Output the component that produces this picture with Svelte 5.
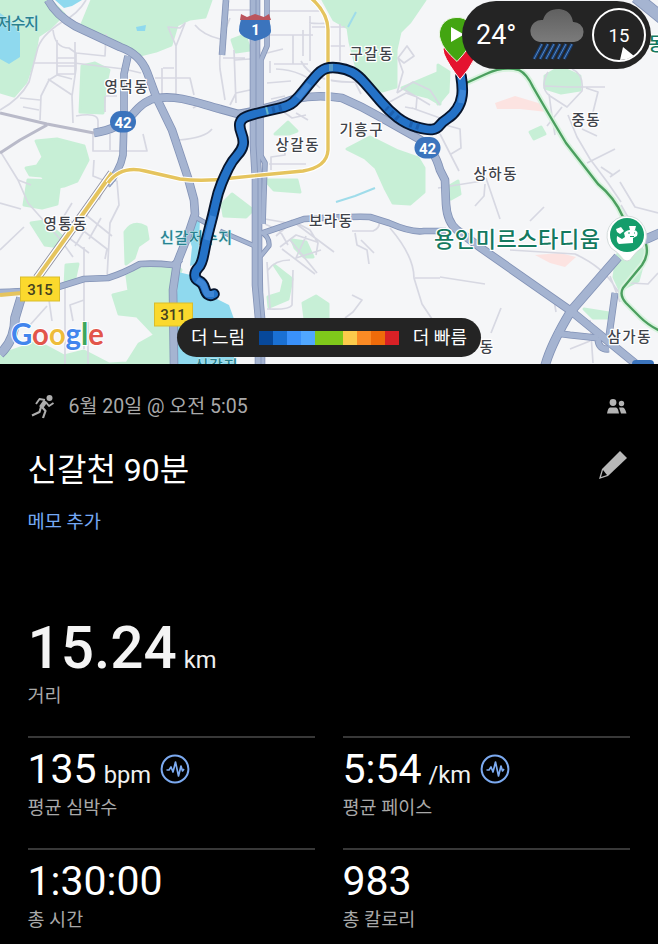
<script>
  const paceColors = [
    "#07489a", "#1a70d3", "#3a91fa", "#50a7ff", "#7fc91b",
    "#7fc91b", "#fccb4b", "#fb8b25", "#ef6b0a", "#d82126"
  ];

  const parks = [
    "M0 0H50L64 14 50 28 38 36 34 58 26 82 14 96 0 92Z",
    "M92 0H211L205 17 190 19 177 25 171 45 156 51 140 55 129 51 119 44 80 29Z",
    "M82 66 95 63 109 70 105 88 103 113 80 112Z",
    "M36 141 57 139 84 146 88 160 77 181 64 186 52 188 42 176 30 175 26 168 37 166 43 157Z",
    "M28 180 60 181 57 204 42 208 24 205Z",
    "M31 223 45 221 64 238 60 247 45 245Z",
    "M125 232Q133 220 146 227L148 239 138 246 134 258 126 264Z",
    "M66 265 78 264 74 282 65 287Z",
    "M127 276 153 262 174 264 181 270 173 290 173 364 66 364 0 364 0 355 38 342 64 356 84 351 109 364 127 363 139 344 155 335 137 316 119 314 113 295 129 291Z",
    "M323 0H425L410 22 400 32 396 50 396 87 382 91 365 80 356 65 350 42 348 28 334 20Z",
    "M402 88 440 72V104L428 97 412 93Z",
    "M438 65 449 72 448 92 438 104Z",
    "M232 40 245 35 250 50 236 52Z",
    "M276 133 288 122 297 131 289 134 275 134Z",
    "M347 149 370 137 398 151 418 158 424 168 424 192 410 204 393 203 385 188 376 168 365 158Z",
    "M265 180H297L300 192 274 190Z",
    "M222 204 232 194 253 210 246 217 224 216Z",
    "M292 240 306 242 313 257 304 257 295 248Z",
    "M274 265 292 279 288 299 269 307 268 297 281 293 284 280Z",
    "M303 303 316 296 328 304V319H305Z",
    "M545 76 560 67 580 76 580 90 561 93 545 88Z",
    "M530 132 541 127 545 134 534 139Z",
    "M617 255 631 242 646 252 638 281 620 290 614 277Z",
    "M584 309 609 313 611 318 593 318Z",
    "M448 187 458 181 460 194 451 199Z"
  ];

  const water = [
    "M0 13Q12 21 20 33V57L9 64 0 59Z",
    "M55 0H82L72 6 64 8Z",
    "M136 27 146 25 145 31 137 31Z",
    "M178 272 195 276 207 300 217 299 229 305 234 319V364H174Z",
    "M190 222 200 219 198 263 190 266 192 247 188 235Z"
  ];

  const streets = [
    "M86 0Q78 14 62 22 40 36 37 51L29 82Q20 99 0 110",
    "M53 30Q55 48 69 48L76 53 105 56 106 34",
    "M33 63H74L124 69 141 73",
    "M57 40V75L49 80 41 96 40 120M75 42V74M57 58H75M57 66H75M57 74H76M76 53V69L72 96 73 123M48 79 72 95M57 75 72 79",
    "M20 98 40 100M23 107 39 110M76 116Q98 112 98 121V129",
    "M168 27 180 28 185 23 176 46ZM176 46V95M163 68H174M155 78H190L194 95M162 68V95M195 25Q203 35 220 39",
    "M220 108Q205 100 193 108M179 140Q205 138 212 129M143 134 147 151 93 151V133M110 134V150M105 96V112M106 96H117",
    "M0 151 18 180 28 203 60 239 73 257M0 250 24 227M0 203 21 209",
    "M18 180 31 185M72 203 64 216 81 229 107 249 105 259M81 211 112 236M69 238 89 253M99 200 107 180 117 181 119 205 110 223 107 278M86 228 75 246M101 218 89 239M94 160 93 176 113 184",
    "M84 247V318 349M84 300 70 305 73 321M33 300H49L52 321M47 306 30 325M88 322V364M65 283V364",
    "M223 10H250M230 18Q218 46 220 69L225 100M235 60 250 59M230 105 236 93 250 90M223 58H245M234 50 236 103",
    "M265 11H322M267 35H313M267 53 283 49M274 64H308M267 83 291 81M270 73 270 61M293 35V64M303 30V56M310 16V61M340 24V61M312 27H345M328 46H345M328 64H347M276 69Q303 70 320 88M301 61Q312 83 355 82L361 94M309 23Q320 24 328 23M271 99 285 96M281 110 292 118 306 115M271 170V157L285 155 284 142M296 113 308 120M269 164H306",
    "M398 58 407 46 414 56 404 63ZM398 58 403 72 397 93M397 93 413 82 430 90 440 105M384 105 406 93 417 97 416 109 405 107M412 108 440 118M405 90 430 105",
    "M265 219 288 223 311 220M276 236 293 221 310 230 318 243 316 255M280 247 296 235 317 242M290 240 317 273M282 249 315 274M268 270Q275 260 290 260M291 220 334 252M306 236 296 258 321 250M293 270 292 305Q290 310 267 309M267 262 270 309M265 224 280 231 288 245",
    "M352 231H373Q381 228 379 219M355 233 357 245 367 250 369 264M361 240 374 253M390 228Q414 256 414 278L422 304 432 319M415 278H440M352 295 362 300 353 312 345 318",
    "M438 123 460 129 461 148 451 154M440 134 459 171M548 72Q539 88 550 96L567 107 582 91Q584 74 572 69M545 86 568 87 605 87M586 88 598 92 592 116M549 94 552 116 555 135M562 107 547 126M568 115 577 137 590 159 608 183 621 202M582 129 597 136M587 163 615 149M610 177 620 170M601 167 613 175",
    "M438 188 482 181M486 178 500 219M475 206 484 196 485 184M530 221 544 207M440 277 485 284M491 333 501 308",
    "M510 250 575 254Q603 267 615 287L621 295M610 276 620 302M630 283 648 284 658 273M621 205 629 219M570 349 590 341M535 287 554 300 556 312M590 320 593 363M620 182 635 207 658 213"
  ];

  const highways = [
    { d: "M48 0Q56 15 75 26L120 47Q140 54 147 72L157 99 172 130 188 178 194 200 195 214 187 238 177 263 173 290 174 364", w: 7 },
    { d: "M128 56 124 74V120L123 155Q120 171 107 185", w: 6 },
    { d: "M94 133Q119 129 132 115 145 99 158 98C180 95 200 104 220 109L238 114Q268 109 294 99 318 94 342 98 361 106 380 117L419 139Q434 148 440 170L445 180 446 204Q447 222 457 230L481 248 571 311 636 364", w: 7 },
    { d: "M263 233 304 219Q355 216 370 217L389 223Q412 233 424 231H446", w: 5 },
    { d: "M0 292Q38 291 55 288L84 279 108 278Q124 273 140 264 155 263 173 265L181 259", w: 5 },
    { d: "M21 298 15 318Q15 340 0 354", w: 8 },
    { d: "M220 231 257 247M195 217 213 227", w: 3.5 },
    { d: "M660 233 644 240", w: 8 },
    { d: "M618 257 571 311Q551 344 545 366", w: 8 },
    { d: "M615 293 609 336M555 333 570 335 598 338M598 338Q598 350 609 349", w: 5.5 },
    { d: "M636 -3 663 19", w: 11 },
    { d: "M226 0 222 55", w: 5 },
    { d: "M267 0V46L261 60V156L265 163 263 224", w: 4 },
    { d: "M261 232Q270 237 269 246L260 257 261 310", w: 3.5 },
    { d: "M255 -2V145L257 180V285L260 318V366", w: 9 }
  ];

  const greenLine =
    "M464 84 486 74Q503 66 519 70 527 74 533 87 545 108 566 143L598 184Q615 198 623 217M646 244Q649 255 642 265L623 288Q619 295 626 303L640 317Q648 325 660 331";
  const yellowLine =
    "M311 -2Q328 13 328 30V150Q327 167 303 171L232 178Q204 182 180 179L145 171Q121 165 108 183";

  const routePoints = [
    [461, 76], [463, 88], [461, 103], [453, 115], [442, 122], [437, 129], [427, 130],
    [406, 124], [389, 111], [372, 91], [358, 75], [346, 69], [331, 67], [321, 70],
    [309, 84], [298, 98], [289, 106], [271, 110], [250, 115], [241, 119], [239, 127],
    [244, 140], [242, 150], [232, 161], [225, 175], [218, 192], [213, 215], [206, 241],
    [202, 264], [195, 271], [195, 279], [203, 283], [206, 293], [210, 296], [214, 294]
  ];
  const route = smooth(routePoints);

  const labels = [
    { x: 126, y: 92, text: "영덕동", width: 43 },
    { x: 371, y: 59, text: "구갈동", width: 43 },
    { x: 297, y: 150, text: "상갈동", width: 43 },
    { x: 361, y: 135, text: "기흥구", width: 43 },
    { x: 585.5, y: 125, text: "중동", width: 28 },
    { x: 495, y: 179, text: "상하동", width: 43 },
    { x: 65, y: 229, text: "영통동", width: 43 },
    { x: 330.5, y: 226, text: "보라동", width: 43 },
    { x: 629, y: 342, text: "삼가동", width: 43 },
    { x: 486.5, y: 352, text: "동", width: 13 },
    { x: 517, y: 247, text: "용인미르스타디움", width: 166, size: 22, kind: "green" }
  ];

  const stats = [
    { value: "135", unit: "bpm", label: "평균 심박수", chart: true },
    { value: "5:54", unit: "/km", label: "평균 페이스", chart: true },
    { value: "1:30:00", label: "총 시간" },
    { value: "983", label: "총 칼로리" }
  ];

  // quadratic curve through the midpoints of the points
  function smooth(points) {
    let d = "M" + points[0];
    for (let i = 1; i < points.length - 1; i++) {
      const [x, y] = points[i];
      const [nx, ny] = points[i + 1];
      d += `Q${x} ${y} ${(x + nx) / 2} ${(y + ny) / 2}`;
    }
    return d + "L" + points[points.length - 1];
  }
</script>

<main>
  <section class="map">
    <svg class="canvas" viewBox="0 0 658 364">
      <rect width="658" height="364" fill="#f5f6f8" />
      {#each parks as d}
        <path {d} class="park" />
      {/each}
      <path d="M495 103 515 96 545 105 547 112 520 109 497 109ZM535 255 560 253 576 257 565 267 550 263Z" fill="#fce3e1" />
      {#each water as d}
        <path {d} fill="#8fd9ee" />
      {/each}
      <path d="M336 202 355 196 375 188M348 27 356 12" class="stream" />
      {#each streets as d}
        <path {d} class="street" />
      {/each}
      <path d="M0 113 47 124 94 133M47 125 20 140 0 153" class="avenue" />

      {#each highways as road}
        <path d={road.d} class="casing" stroke-width={road.w + 1.6} />
      {/each}
      {#each highways as road}
        <path d={road.d} class="highway" stroke-width={road.w} />
      {/each}
      <path d="M256 0V145L258 180V285L261 318V364" class="median" />

      <path d="M112 173 73 228 37 278" stroke="#8d8fa0" stroke-width="8.5" class="line" />
      <path d="M112 173 73 228 37 278" stroke="#fff" stroke-width="6.8" class="line" />
      <path d="M112 173 73 228 37 278M0 295 22 293" stroke="#e5c45e" stroke-width="4" class="line" />
      <path d={yellowLine} stroke="#fff" stroke-width="5.5" class="line" />
      <path d={yellowLine} stroke="#e5c45e" stroke-width="3.4" class="line" />
      <path d={greenLine} stroke="#d9f3df" stroke-width="6" class="line" />
      <path d={greenLine} stroke="#4b9f5f" stroke-width="2.4" class="line" />

      {#each labels as { x, y, text, width, size = 14.5, kind = "dark" }}
        <text {x} {y} font-size={size} textLength={width} class="label {kind}">{text}</text>
      {/each}
      <text x="-3" y="29" font-size="16" textLength="42" class="label teal start">저수지</text>
      <text x="648" y="51" font-size="19" class="label green start">동</text>
      <text x="196" y="243" font-size="15" textLength="72" class="label teal">신갈저수지</text>
      <text x="216" y="371" font-size="15" textLength="43" class="label teal">신갈지</text>

      <path d={route} stroke="#07152d" stroke-width="11.5" class="line round" />
      <path d={route} stroke="#2472c7" stroke-width="7.8" class="line round" />
      <path d="M197 280 203 284 207 294 214 294M213 216 207 240M309 84 298 98M463 90 461 103" stroke="#3e86d6" stroke-width="6" class="line" />
      <path d="M398 119 386 108M272 110 284 107M419 127 407 123" stroke="#1c5fae" stroke-width="6" stroke-dasharray="3 4" fill="none" />
      <path d="M329 67.500H333" stroke="#5a9ac4" stroke-width="7" />
      <path d="M266 111 268 110.500" stroke="#65b6c8" stroke-width="7" />

      <!-- road shields -->
      <rect x="110" y="111" width="26" height="21.500" rx="10.700" fill="#3b74bd" />
      <text x="123" y="127.500" class="shield">42</text>
      <rect x="414.500" y="137" width="26" height="21.500" rx="10.700" fill="#3b74bd" />
      <text x="427.500" y="153.500" class="shield">42</text>
      <path d="M241 19Q239 26 239 31 240 37 255 41 271 37 271 31 271 26 269 19Z" fill="#3b74bd" />
      <path d="M240 20 241 14 247 17 255 14 264 17 269 14 271 20Z" fill="#bb555d" />
      <text x="255.500" y="34.500" class="shield">1</text>
      <g fill="#fbd92d" stroke="#d9bd2d">
        <rect x="20.500" y="277" width="39" height="24" />
        <rect x="154.500" y="303" width="38" height="23" />
      </g>
      <text x="40" y="294.500" class="plate">315</text>
      <text x="173" y="320" class="plate">311</text>
      <rect x="632" y="360" width="22" height="8" rx="4" fill="#3b74bd" />

      <!-- stadium marker -->
      <path d="M626.500 216A20 20 0 0 1 643 247Q636 251 630 260 627 262 624 260 617 251 611 248A20 20 0 0 1 626.500 216Z" fill="#fff" stroke="#d5dcdc" />
      <circle cx="627" cy="235" r="17" fill="#159d6b" />
      <path d="M616 229 621 227 624 231 620 234 617 232ZM629 226 636 226 635 230 630 230ZM617 236 622 239 625 237 624 233Q628 229 634 230 639 231 637 236L633 238V243L619 244Q616 242 617 236Z" fill="#fff" />
      <path d="M628 233H630M634 233H635M630 236.500H634" stroke="#159d6b" />

      <!-- finish and start pins -->
      <path d="M443 49 444 54Q448 64 460 79.500 469 70 476 56L470 40 446 42Z" fill="#e4132f" stroke="#fff" stroke-width="1" />
      <path d="M456 17.500A16 16 0 0 1 473 38Q470 48 457 61.500 443 49 440.500 40A16.500 16.500 0 0 1 456 17.500Z" fill="#43a511" stroke="#e9f5e2" stroke-width="1" />
      <path d="M451 27V42L464 34.500Z" fill="#fff" />

      <text x="11" y="345" class="google" textLength="93" lengthAdjust="spacingAndGlyphs"
        ><tspan fill="#4285ed">G</tspan><tspan fill="#e2564b">o</tspan><tspan fill="#eebc3b">o</tspan><tspan fill="#4285ed">g</tspan><tspan fill="#3da75c">l</tspan><tspan fill="#e2564b">e</tspan></text>
    </svg>

    <div class="weather">
      <span class="temperature">24°</span>
      <svg class="cloud" width="56" height="54" viewBox="0 0 56 54">
        <defs>
          <linearGradient id="cloud" x2="0" y2="1">
            <stop offset="0" stop-color="#606060" />
            <stop offset="1" stop-color="#7b7b7b" />
          </linearGradient>
        </defs>
        <path d="M12 34A11 11 0 1 1 15 12Q18 1 31 1 43 2 45 14A10 10 0 1 1 46 34Z" fill="url(#cloud)" />
        <path d="M14 36 6 51M20 36 12 51M26 36 18 51M32 36 24 51M38 36 30 51M44 36 36 51" stroke="#173f77" stroke-width="3.4" />
        <path d="M14 36 6 51M20 36 12 51M26 36 18 51M32 36 24 51M38 36 30 51M44 36 36 51" stroke="#5786bd" stroke-width="1" />
      </svg>
      <div class="wind">
        15
        <svg class="arrow" width="14" height="14" viewBox="0 0 14 14">
          <path d="M3 0 0 13 7 12 14 9Z" fill="#fff" />
        </svg>
      </div>
    </div>

    <div class="legend">
      <span>더 느림</span>
      <div class="scale">
        {#each paceColors as color}
          <i style:background={color}></i>
        {/each}
      </div>
      <span>더 빠름</span>
    </div>
  </section>

  <section class="details">
    <header>
      <svg class="runner" width="24" height="26" viewBox="0 0 24 26">
        <circle cx="18.500" cy="4" r="3" fill="#adadad" />
        <g fill="none" stroke="#adadad" stroke-linejoin="round">
          <path d="M14.500 7 10 13.500" stroke-width="4.500" />
          <path d="M14 6 8.500 5 5 10M15.500 9 18 12 22.500 9" stroke-width="1.900" />
          <path d="M10 13 8.500 18 1 21.500M11 13 14.500 17 12 24" stroke-width="2.200" />
        </g>
      </svg>
      <span class="date">6월 20일 @ 오전 5:05</span>
      <svg class="people" width="22" height="18" viewBox="0 0 22 18" fill="#b4b4b4">
        <circle cx="7" cy="4.500" r="3.400" />
        <circle cx="15.500" cy="5.500" r="2.700" />
        <path d="M1 15.500Q2 9.500 4 9.500H10Q12 9.500 13 15.500ZM13 9.500H17Q19 10 20.500 15.500H15Z" />
      </svg>
    </header>

    <div class="title-row">
      <h1>신갈천 90분</h1>
      <svg width="30" height="30" viewBox="0 0 30 30">
        <path d="M22 1 29 8 10 26 1 29 4 19Z" fill="#b8b8b8" />
        <path d="M5 20 9 25 3 27Z" fill="#000" />
      </svg>
    </div>
    <a class="memo" href="#memo">메모 추가</a>

    <div class="distance">
      <div class="reading"><strong>15.24</strong><span class="unit">km</span></div>
      <div class="caption">거리</div>
    </div>

    <div class="stats">
      {#each stats as stat}
        <div class="stat">
          <div class="reading">
            <span class="value">{stat.value}</span>
            {#if stat.unit}<span class="unit">{stat.unit}</span>{/if}
            {#if stat.chart}
              <svg class="pulse" width="30" height="30" viewBox="0 0 30 30">
                <circle cx="15" cy="15" r="13.400" />
                <path d="M6.500 16H9L11 13 13 18 15.500 8 18.500 22 21 12 22.500 17 24 15" />
              </svg>
            {/if}
          </div>
          <div class="caption">{stat.label}</div>
        </div>
      {/each}
    </div>
  </section>
</main>

<style>
  :global(body) {
    background: #000;
  }

  main {
    width: 658px;
    height: 944px;
    overflow: hidden;
    background: #000;
    color: #fff;
    font-family: Roboto, "Noto Sans CJK KR", sans-serif;
  }

  .map {
    position: relative;
    height: 364px;
    overflow: hidden;
  }

  .canvas {
    display: block;
    width: 658px;
    height: 364px;
  }

  .park {
    fill: #c7efd6;
    stroke: #c7efd6;
    stroke-width: 3;
    stroke-linejoin: round;
  }

  .street,
  .stream,
  .avenue,
  .casing,
  .highway,
  .median,
  .line {
    fill: none;
    stroke-linejoin: round;
  }

  .round {
    stroke-linecap: round;
  }

  .street {
    stroke: #d7d8e2;
    stroke-width: 1.7;
  }

  .stream {
    stroke: #9fdcea;
    stroke-width: 2;
  }

  .avenue {
    stroke: #b9bac9;
    stroke-width: 3;
  }

  .casing {
    stroke: #8292b6;
  }

  .highway {
    stroke: #a5b4d1;
  }

  .median {
    stroke: #8292b6;
    stroke-width: 0.8;
  }

  .label {
    font-family: "Noto Sans CJK KR", sans-serif;
    font-weight: 500;
    text-anchor: middle;
    paint-order: stroke;
    stroke: #fff;
    stroke-width: 2.5px;
    stroke-linejoin: round;
  }

  .start {
    text-anchor: start;
  }

  .dark {
    fill: #3f434a;
  }

  .teal {
    fill: #29818f;
    stroke: #c9eef0;
    stroke-width: 1px;
  }

  .green {
    fill: #13795f;
  }

  .shield {
    fill: #fff;
    font-size: 15px;
    font-weight: 700;
    text-anchor: middle;
  }

  .plate {
    fill: #45411f;
    font-size: 15px;
    font-weight: 500;
    text-anchor: middle;
  }

  .google {
    font-family: Lato, sans-serif;
    font-size: 30px;
    font-weight: 700;
    paint-order: stroke;
    stroke: #fff;
    stroke-width: 2px;
  }

  .weather {
    position: absolute;
    top: 1px;
    left: 462px;
    box-sizing: border-box;
    width: 189px;
    height: 68px;
    padding: 0 5px 0 14px;
    display: flex;
    align-items: center;
    border-radius: 34px;
    background: #242424;
  }

  .temperature {
    width: 52px;
    font-size: 27px;
    line-height: 70px;
  }

  .wind {
    position: relative;
    box-sizing: border-box;
    width: 54px;
    height: 54px;
    margin-left: auto;
    border: 2px solid #fff;
    border-radius: 50%;
    font-size: 18.5px;
    line-height: 52px;
    text-align: center;
  }

  .arrow {
    position: absolute;
    right: 10px;
    bottom: -1px;
  }

  .legend {
    position: absolute;
    top: 318px;
    left: 177px;
    box-sizing: border-box;
    width: 304px;
    height: 39px;
    padding: 0 14px;
    display: flex;
    align-items: center;
    justify-content: space-between;
    border-radius: 20px;
    background: #242424;
    font-size: 18px;
    line-height: 41px;
  }

  .scale {
    display: flex;
  }

  .scale i {
    width: 14px;
    height: 14px;
  }

  .details {
    padding: 27px 28px 0 27.5px;
  }

  header {
    display: flex;
    align-items: center;
    height: 32px;
  }

  .runner {
    margin-left: 3px;
  }

  .date {
    margin-left: 14px;
    color: #a9a9a9;
    font-size: 19.5px;
    line-height: 34px;
  }

  .people {
    margin-left: auto;
    margin-right: 2px;
  }

  .title-row {
    display: flex;
    align-items: center;
    justify-content: space-between;
    height: 48px;
    margin-top: 23px;
  }

  .title-row svg {
    margin: 0 2px 10px 0;
  }

  h1 {
    margin: 0;
    font-size: 32px;
    font-weight: 400;
    line-height: 50px;
  }

  .memo {
    display: block;
    height: 28px;
    margin-top: 14px;
    color: #74a9f5;
    font-size: 18.7px;
    line-height: 28px;
    text-decoration: none;
  }

  .distance {
    margin-top: 81px;
  }

  .reading {
    display: flex;
    align-items: baseline;
    height: 48px;
    line-height: 48px;
  }

  .distance .reading {
    height: 60px;
    line-height: 62px;
  }

  strong {
    color: #f4f4f4;
    font-size: 58.5px;
    font-weight: 500;
  }

  .value {
    font-size: 41px;
  }

  .unit {
    margin-left: 7px;
    color: #f0f0f0;
    font-size: 23.7px;
  }

  .pulse {
    align-self: center;
    margin-left: 9px;
    fill: none;
    stroke: #7caaf0;
    stroke-width: 2;
    stroke-linejoin: round;
  }

  .pulse path {
    stroke-width: 1.7;
  }

  .caption {
    color: #a9a9a9;
    font-size: 18.5px;
    line-height: 30px;
  }

  .distance .caption {
    margin-top: 4px;
  }

  .stats {
    display: grid;
    grid-template-columns: 287px 287px;
    column-gap: 28px;
    margin-top: 25px;
  }

  .stat {
    box-sizing: border-box;
    height: 112px;
    padding-top: 7px;
    border-top: 2px solid #383838;
  }
</style>
